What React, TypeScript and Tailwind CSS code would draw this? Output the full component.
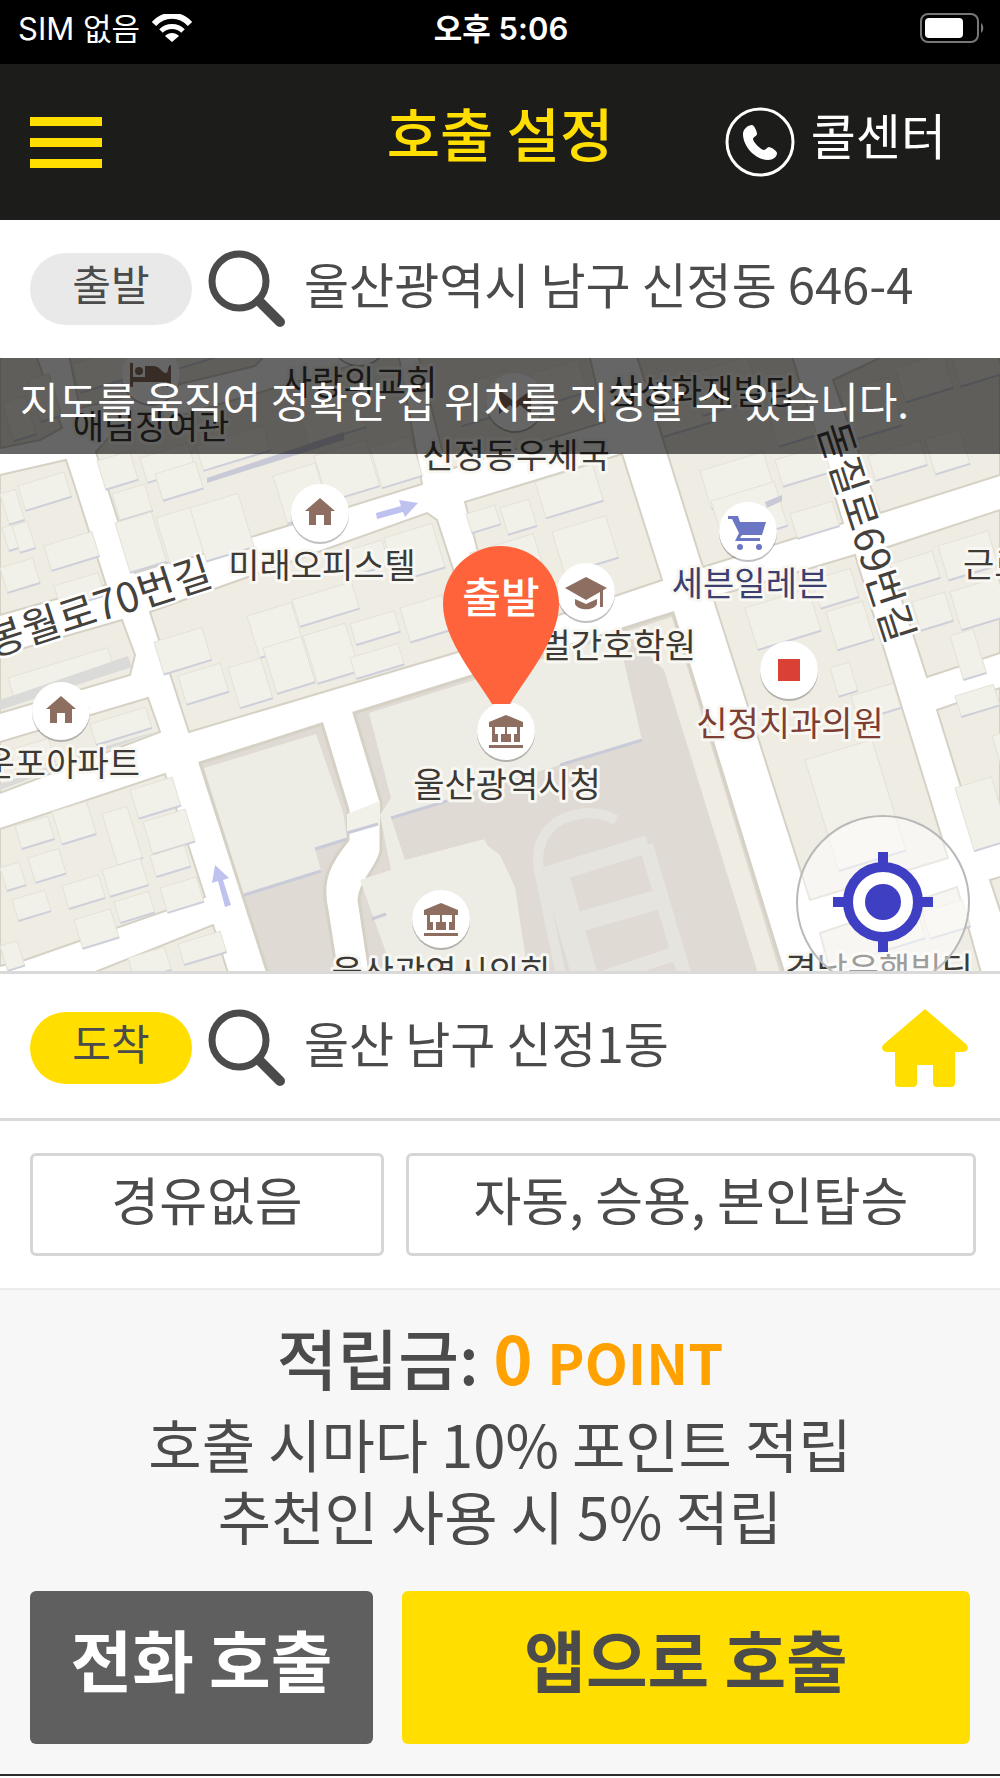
import { ReactNode, useState } from 'react';

type Building = [x: number, y: number, w: number, h: number];

interface Poi {
  x: number;
  y: number;
  icon?: ReactNode;
}

interface MapLabel {
  text: string;
  x: number;
  y: number;
  anchor?: 'start' | 'middle' | 'end';
  color?: string;
}

const HANGUL = '"Noto Sans CJK KR", sans-serif';

const blocks = [
  '0,350 34,350 62,428 40,440 0,448',
  '68,350 270,350 255,366 80,408',
  '0,475 66,460 74,484 106,585 0,615',
  '96,452 110,436 398,352 422,484 290,525 135,573',
  '150,612 427,513 437,520 478,646 189,732',
  '417,350 588,350 605,422 447,470',
  '465,502 622,454 662,580 500,635',
  '635,350 790,350 843,523 703,567',
  '833,380 897,350 1000,350 1000,475 880,513',
  '885,548 1000,510 1000,653 927,677',
  '713,597 855,555 948,858 810,900',
  '937,710 1000,688 1000,838 980,848',
  '820,933 957,887 983,980 832,980',
  '990,880 1010,874 1010,940',
  '0,655 122,620 135,655 130,675 0,713',
  '0,742 148,698 160,732 0,793',
  '0,829 165,774 205,897 25,960 0,966',
  '60,986 213,925 232,986',
];

// north-west corner and size, every footprint follows the street grid
const buildings: Building[] = [
  [2, 395, 24, 40], [28, 372, 22, 44], [72, 356, 70, 30], [150, 336, 60, 32],
  [0, 486, 16, 32], [18, 478, 48, 26], [2, 520, 14, 24], [12, 518, 16, 28], [44, 538, 50, 26],
  [0, 560, 34, 26], [54, 578, 46, 24],
  [97, 453, 34, 30], [112, 486, 34, 28], [140, 450, 50, 26], [155, 466, 42, 28],
  [115, 515, 38, 52], [156, 510, 36, 48], [190, 500, 50, 56], [196, 438, 70, 26],
  [273, 468, 44, 50], [314, 448, 54, 48], [370, 440, 42, 42], [300, 408, 60, 30],
  [336, 546, 48, 26], [384, 530, 50, 46], [247, 608, 46, 44], [292, 592, 62, 28],
  [154, 634, 50, 34], [178, 668, 44, 30], [228, 660, 34, 42], [263, 640, 40, 48],
  [303, 628, 44, 50], [350, 616, 46, 22], [400, 600, 44, 36], [350, 650, 50, 22],
  [466, 506, 30, 20], [500, 500, 30, 28], [535, 474, 60, 38], [470, 545, 66, 30],
  [552, 524, 56, 44], [450, 380, 60, 40], [530, 366, 50, 34],
  [650, 385, 54, 46], [690, 366, 60, 44], [700, 463, 66, 40], [711, 493, 66, 46],
  [775, 452, 50, 28], [790, 506, 44, 26], [770, 410, 40, 30],
  [840, 384, 50, 50], [895, 360, 50, 36], [952, 350, 44, 30], [868, 448, 54, 26], [925, 432, 36, 36],
  [890, 556, 44, 28], [938, 538, 52, 36], [912, 594, 34, 30], [950, 584, 50, 40], [950, 628, 24, 46],
  [745, 600, 66, 44], [812, 572, 40, 30], [826, 604, 38, 40], [830, 660, 20, 30], [851, 688, 44, 26],
  [805, 752, 70, 116],
  [955, 688, 40, 22], [955, 780, 38, 66], [992, 728, 20, 50],
  [870, 920, 50, 26], [922, 904, 42, 28],
  [10, 742, 40, 24], [90, 716, 58, 22], [8, 670, 104, 24],
  [15, 818, 34, 24], [52, 804, 36, 34], [102, 806, 26, 54], [130, 782, 44, 30], [143, 814, 44, 34],
  [0, 860, 20, 24], [28, 850, 32, 26], [62, 878, 38, 24], [102, 862, 40, 28], [150, 848, 36, 22],
  [160, 880, 38, 26], [12, 892, 34, 22], [74, 912, 38, 30], [114, 894, 36, 22], [0, 938, 18, 26],
  [128, 950, 38, 24], [178, 936, 44, 22],
];

const labels: MapLabel[] = [
  { text: '애림장여관', x: 151, y: 439 },
  { text: '사랑의교회', x: 359, y: 395 },
  { text: '신정동우체국', x: 516, y: 468 },
  { text: '삼성화재빌딩', x: 702, y: 404 },
  { text: '미래오피스텔', x: 322, y: 578 },
  { text: '세븐일레븐', x: 750, y: 596, color: '#3c4070' },
  { text: '벌간호학원', x: 696, y: 658, anchor: 'end' },
  { text: '신정치과의원', x: 790, y: 736, color: '#7d3e33' },
  { text: '울산광역시청', x: 507, y: 797 },
  { text: '운포아파트', x: 140, y: 776, anchor: 'end' },
  { text: '근로', x: 963, y: 577, anchor: 'start' },
  { text: '울산광역시의회', x: 441, y: 985 },
  { text: '경남은행빌딩', x: 879, y: 982 },
];

const houseMark = <path d="M0 -15 L15 -2 H11 V12 H4 V2 H-4 V12 H-11 V-2 H-15 Z" fill="#8d6e60" />;

const hallMark = (
  <g fill="#8d6e60">
    <path d="M0 -16 L17 -9 V-4 H-17 V-9 Z" />
    <path d="M-14 -5 h3 v8 h3 v8 h-6 z M14 -5 h-3 v8 h-3 v8 h6 z" />
    <path d="M-1 -5 h2 v8 h4 v8 h-10 v-8 h4 z" />
    <path d="M-17 14 h34 v3 h-34 z" />
  </g>
);

const pois: Poi[] = [
  {
    x: 151,
    y: 375,
    icon: (
      <g fill="#8d6e60">
        <path d="M-21 -12 h3 v14 h38 v10 h-4 v-5 h-34 v5 h-3 z" />
        <circle cx="-12" cy="-4" r="4" />
        <path d="M-6 -9 h8 c7 0 9 7 13 7 c3 0 1 -8 5 -8 v13 h-26 z" />
      </g>
    ),
  },
  { x: 359, y: 336 },
  {
    x: 515,
    y: 402,
    icon: <path d="M-16 -12 L0 0 L16 -12 V12 L5 3 L0 7 L-5 3 L-16 12 Z" fill="#8d6e60" />,
  },
  { x: 320, y: 513, icon: houseMark },
  {
    x: 748,
    y: 531,
    icon: (
      <g fill="#6b77c4">
        <path d="M-20 -15 h10 l2 6 h26 l-4 13 h-20 l-2 3 h20 v3 h-25 l4 -8 l-7 -14 h-4 z" />
        <circle cx="-8" cy="16" r="3" />
        <circle cx="11" cy="16" r="3" />
      </g>
    ),
  },
  {
    x: 586,
    y: 592,
    icon: (
      <g fill="#8d6e60">
        <path d="M0 -15 L21 -4 L0 8 L-21 -4 Z" />
        <path d="M-11 7 L0 12 L11 7 V12 C8 19 -8 19 -11 12 Z" />
        <path d="M14 -3 h3 v18 h-3 z" />
      </g>
    ),
  },
  { x: 789, y: 670, icon: <rect x="-11" y="-11" width="22" height="22" fill="#db4035" /> },
  { x: 61, y: 711, icon: houseMark },
  { x: 506, y: 731, icon: hallMark },
  { x: 441, y: 919, icon: hallMark },
];

function StreetMap() {
  return (
    <svg
      className="block h-full w-full"
      viewBox="0 358 1000 613"
      preserveAspectRatio="xMidYMid slice"
      role="img"
      aria-label="지도"
    >
      <rect y="358" width="1000" height="613" fill="#ffffff" />
      <g fill="#efece4" stroke="#d6d1c5" strokeWidth="2">
        {blocks.map((points) => (
          <polygon key={points} points={points} />
        ))}
      </g>
      {buildings.map(([x, y, w, h]) => (
        <g key={`${x}-${y}`} transform={`translate(${x} ${y + 8}) rotate(-17)`}>
          <rect width={w} height={h} fill="#f2f1e9" stroke="#e4e1d6" />
          <path d={`M0 ${h} H${w}`} stroke="#cdcfdb" strokeWidth="2" />
        </g>
      ))}
      <path d="M207 478 L344 432 V440 L207 483 Z" fill="#c8c9d6" />
      <path d="M0 700 L128 656 L132 667 L0 710 Z" fill="#dadad8" />
      <path d="M0 784 L110 745 L158 731 L0 790 Z" fill="#dadad8" />
      <path d="M765 502 L782 495 V501 L767 508 Z" fill="#c8c9d6" />

      {/* lot west of city hall */}
      <path
        d="M200 763 L322 724 L348 810 V840 C330 862 320 880 327 910 L338 980 H270 Z"
        fill="#dfdad3"
        stroke="#d6d1c5"
        strokeWidth="3"
      />
      <path d="M204 768 L316 734 L343 812 L347 838 L315 849 L321 870 L244 895 Z" fill="#eeede5" />
      <path d="M244 895 L321 871 M315 849 L347 839" stroke="#c9cbd9" strokeWidth="3" />

      {/* city hall grounds */}
      <path
        d="M354 713 L673 613 L786 980 H371 L359 900 C360 880 380 865 381 850 V802 Z"
        fill="#dfdad3"
        stroke="#d6d1c5"
        strokeWidth="3"
      />
      <path d="M625 632 L672 617 L782 980 H760 L664 670 Z" fill="#efece4" />
      <path
        d="M369 713 L618 635 L642 740 L391 817 L405 859 L484 839 L488 846 L500 855 L515 887 L529 980 H396 L360 880 L391 870 L380 815 L391 798 Z"
        fill="#eeede5"
      />
      <path d="M391 817 L642 740 L640 780 L500 855 L484 839 L405 860 Z" fill="#dfdad3" />
      <path d="M391 818 L447 801 M560 765 L642 740 M372 919 L386 914" stroke="#c9cbd9" strokeWidth="3" />
      <path d="M347 814 L380 801 V825 L347 834 Z" fill="#f2f1e9" />
      <path d="M347 833 L378 824" stroke="#c9cbd9" strokeWidth="3" />
      <g fill="none" stroke="#e6e4df">
        <path d="M616 820 C590 806 562 816 550 828 C536 843 536 862 541 880 L562 980" strokeWidth="10" />
        <path d="M555 872 L586 980" strokeWidth="26" />
        <path d="M545 876 L648 844" strokeWidth="18" />
        <path d="M646 845 L686 980" strokeWidth="14" />
        <path d="M575 923 L660 899" strokeWidth="20" />
        <path d="M590 982 L680 952" strokeWidth="14" />
      </g>

      {/* one way arrows */}
      <path d="M376 513 L401 506 L399 500 L418 503 L405 517 L403 512 L377 519 Z" fill="#bfc2ee" />
      <path d="M215 865 L229 878 L223 880 L231 905 L225 907 L218 881 L212 883 Z" fill="#bfc2ee" />

      <g
        fontFamily={HANGUL}
        fill="#45423d"
        stroke="#ffffff"
        strokeWidth="5"
        strokeLinejoin="round"
        paintOrder="stroke"
      >
        <text transform="translate(-8 657) rotate(-18)" fontSize="41">
          봉월로70번길
        </text>
        <text transform="translate(867 532) rotate(72)" fontSize="40" textAnchor="middle" dy="15">
          돋질로69번길
        </text>
      </g>

      {pois.map(({ x, y, icon }) => (
        <g key={`${x}-${y}`} transform={`translate(${x} ${y})`}>
          <circle cy="2" r="29" fill="#000000" fillOpacity="0.25" />
          <circle r="29" fill="#ffffff" />
          {icon}
        </g>
      ))}

      <g
        fontFamily={HANGUL}
        fontSize="34"
        stroke="#f8f7f2"
        strokeWidth="6"
        strokeLinejoin="round"
        paintOrder="stroke"
      >
        {labels.map(({ text, x, y, anchor = 'middle', color = '#3d3a36' }) => (
          <text key={text} x={x} y={y} textAnchor={anchor} fill={color}>
            {text}
          </text>
        ))}
      </g>

      <path
        d="M492 704 C478 680 443 640 443 604 A58 58 0 0 1 559 604 C559 640 524 680 510 704 Z"
        fill="#ff633b"
      />
      <text x="501" y="613" textAnchor="middle" fontFamily={HANGUL} fontSize="42" fontWeight="500" fill="#ffffff">
        출발
      </text>
    </svg>
  );
}

function StatusBar() {
  return (
    <div className="grid h-16 grid-cols-[1fr_auto_1fr] items-center bg-black pr-4 pb-2 pl-[18px] font-['Inter','Noto_Sans_CJK_KR',sans-serif] text-[31px] leading-none text-white">
      <div className="flex items-center gap-3">
        <span>SIM 없음</span>
        <svg className="h-7 w-10" viewBox="0 0 40 28" fill="none" stroke="currentColor" aria-hidden="true">
          <path d="M2 10 C12 -1 28 -1 38 10" strokeWidth="6" />
          <path d="M9 17 C15 11 25 11 31 17" strokeWidth="5" />
          <path d="M13 22 C17 18 23 18 27 22 L20 28 Z" fill="currentColor" stroke="none" />
        </svg>
      </div>
      <span className="font-semibold">오후 5:06</span>
      <svg className="h-[30px] w-16 justify-self-end" viewBox="0 0 64 30" aria-hidden="true">
        <rect x="1" y="1" width="57" height="28" rx="7" fill="none" stroke="#77777a" strokeWidth="2" />
        <rect x="5" y="5" width="38" height="20" rx="4" fill="#ffffff" />
        <path d="M61 10 C64 12 64 18 61 20 Z" fill="#77777a" />
      </svg>
    </div>
  );
}

function Header() {
  return (
    <header className="grid h-[156px] grid-cols-[1fr_auto_1fr] items-center bg-[#1c1c1a] px-[30px]">
      <button type="button" aria-label="메뉴" className="flex w-[72px] flex-col gap-3">
        <span className="h-[9px] bg-[#ffde00]" />
        <span className="h-[9px] bg-[#ffde00]" />
        <span className="h-[9px] bg-[#ffde00]" />
      </button>
      <h1 className="pb-5 text-[58px] leading-[72px] font-medium text-[#ffde00]">호출 설정</h1>
      <button type="button" className="mr-6 flex items-center gap-4 justify-self-end text-white">
        <svg className="size-[70px]" viewBox="0 0 70 70" aria-hidden="true">
          <circle cx="35" cy="35" r="33" fill="none" stroke="currentColor" strokeWidth="3" />
          <path
            d="M27 18 C23 18 18 22 18 27 C18 40 31 53 43 53 C48 53 52 50 52 46 C52 44 46 40 44 40 C42 40 41 43 39 43 C36 43 28 35 28 32 C28 30 32 29 32 27 C32 24 29 18 27 18 Z"
            fill="currentColor"
          />
        </svg>
        <span className="pb-4 text-[49px] leading-[60px]">콜센터</span>
      </button>
    </header>
  );
}

function SearchIcon() {
  return (
    <svg className="size-[78px] shrink-0" viewBox="0 0 78 78" fill="none" stroke="currentColor" aria-hidden="true">
      <circle cx="31" cy="31" r="27" strokeWidth="7" />
      <path d="M51 51 L72 72" strokeWidth="10" strokeLinecap="round" />
    </svg>
  );
}

interface PlaceRowProps {
  tag: string;
  address: string;
  tagClass: string;
  children?: ReactNode;
}

function PlaceRow({ tag, address, tagClass, children }: PlaceRowProps) {
  return (
    <div className="flex items-center px-[30px]">
      <span
        className={`flex h-[72px] w-[162px] shrink-0 items-center justify-center rounded-full pb-3 text-[42px] leading-[60px] ${tagClass}`}
      >
        {tag}
      </span>
      <button type="button" className="ml-4 flex grow items-center gap-[18px] text-left">
        <SearchIcon />
        <span className="pb-3 text-[49px] leading-[60px] whitespace-nowrap">{address}</span>
      </button>
      {children}
    </div>
  );
}

export default function App() {
  const [home, setHome] = useState(false);

  return (
    <div className="bg-white font-['Noto_Sans_CJK_KR',sans-serif] text-[#4b4b4b]">
      <StatusBar />
      <Header />

      <main>
        <section className="flex h-[138px] flex-col justify-center">
          <PlaceRow tag="출발" address="울산광역시 남구 신정동 646-4" tagClass="bg-[#e9e9e9]" />
        </section>

        <section className="relative h-[613px] overflow-hidden">
          <StreetMap />
          <p className="absolute inset-x-0 top-0 h-24 bg-black/60 pt-3 pl-5 text-[42px] leading-[60px] whitespace-nowrap text-white">
            지도를 움직여 정확한 집 위치를 지정할 수 있습니다.
          </p>
          <button
            type="button"
            aria-label="현재 위치"
            className="absolute right-[30px] -bottom-[18px] flex size-[174px] items-center justify-center rounded-full border-2 border-[#b9b9b9] bg-white/50"
          >
            <svg className="size-[100px]" viewBox="0 0 100 100" aria-hidden="true">
              <circle cx="50" cy="50" r="35" fill="#ffffff" stroke="#3f3fc4" strokeWidth="10" />
              <circle cx="50" cy="50" r="18" fill="#3f3fc4" />
              <path d="M45 0h10v12h-10z M45 88h10v12h-10z M0 45h12v10h-12z M88 45h12v10h-12z" fill="#3f3fc4" />
            </svg>
          </button>
        </section>

        <section className="flex h-[150px] flex-col justify-center border-y-[3px] border-[#dadada] pt-1">
          <PlaceRow tag="도착" address="울산 남구 신정1동" tagClass="bg-[#ffde00]">
            <button type="button" aria-label="집으로" aria-pressed={home} onClick={() => setHome(!home)}>
              <svg className="h-[78px] w-[88px]" viewBox="0 0 88 78" fill="#ffde00" aria-hidden="true">
                <path d="M43 0 L84 35 C88 39 85 43 81 43 H73 V74 Q73 78 69 78 H55 Q51 78 51 74 V56 H35 V74 Q35 78 31 78 H17 Q13 78 13 74 V43 H5 C1 43 -2 39 2 35 Z" />
              </svg>
            </button>
          </PlaceRow>
        </section>

        <section className="grid grid-cols-[354fr_570fr] gap-[22px] py-8 pr-6 pl-[30px] text-[52px] leading-[72px]">
          <button type="button" className="h-[103px] rounded-md border-[3px] border-[#d6d6d6] pb-3">
            경유없음
          </button>
          <button type="button" className="h-[103px] rounded-md border-[3px] border-[#d6d6d6] pb-3">
            자동, 승용, 본인탑승
          </button>
        </section>

        <section className="border-t-2 border-b-2 border-t-[#ececec] border-b-[#2b2b2b] bg-[#f7f7f7] px-[30px] pt-6 pb-[30px] text-center">
          <p className="text-[66px] leading-[84px] font-medium">
            적립금:{' '}
            <span className="font-bold text-[#ffa200]">
              0 <span className="text-[56px]">POINT</span>
            </span>
          </p>
          <p className="mt-1 text-[58px] leading-[72px]">
            호출 시마다 10% 포인트 적립
            <br />
            추천인 사용 시 5% 적립
          </p>
          <div className="mt-10 grid grid-cols-[343fr_568fr] gap-[29px] text-[67px] leading-[84px] font-bold">
            <button type="button" className="h-[153px] rounded-md bg-[#5f5f5f] pb-5 text-white">
              전화 호출
            </button>
            <button type="button" className="h-[153px] rounded-md bg-[#ffde00] pb-5">
              앱으로 호출
            </button>
          </div>
        </section>
      </main>
    </div>
  );
}
